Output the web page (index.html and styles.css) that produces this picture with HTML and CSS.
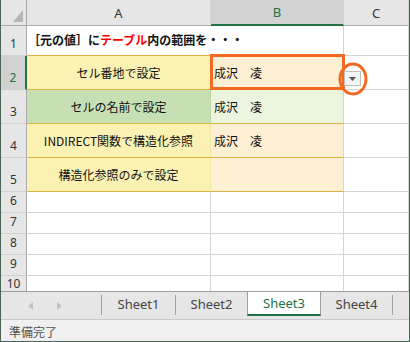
FILE: index.html
```html
<!DOCTYPE html>
<html lang="ja">
<head>
  <meta charset="UTF-8" />
  <title>Excel - 入力規則</title>
  <link rel="stylesheet" href="styles.css">
</head>
<body>

<div class="window">

  <!-- grid -->
  <div class="sheet">
    <div class="corner">
      <svg class="corner-tri" width="10" height="12" viewBox="0 0 10 12"><polygon points="10,0 10,12 0,12" fill="#b4b4b4"/></svg>
    </div>
    <div class="colhead">A</div>
    <div class="colhead sel">B</div>
    <div class="colhead">C</div>

    <div class="rowhead">1</div>
    <div class="cell title">［元の値］に<span class="red">テーブル</span>内の範囲を・・・</div>
    <div class="cell gold-b"></div>
    <div class="cell"></div>

    <div class="rowhead sel">2</div>
    <div class="cell label yel">セル番地で設定</div>
    <div class="cell org picked">
      成沢　凌
      <div class="pick-box"></div>
      <div class="drop-btn">
        <svg width="7" height="4" viewBox="0 0 7 4"><polygon points="0,0 7,0 3.5,4" fill="#555"/></svg>
      </div>
      <svg class="circle" width="30" height="34" viewBox="0 0 30 34"><ellipse cx="15" cy="17" rx="13" ry="15" fill="none" stroke="#f26a21" stroke-width="3"/></svg>
    </div>
    <div class="cell"></div>

    <div class="rowhead">3</div>
    <div class="cell label grn">セルの名前で設定</div>
    <div class="cell lgrn">成沢　凌</div>
    <div class="cell"></div>

    <div class="rowhead">4</div>
    <div class="cell label yel">INDIRECT関数で構造化参照</div>
    <div class="cell org">成沢　凌</div>
    <div class="cell"></div>

    <div class="rowhead">5</div>
    <div class="cell label yel">構造化参照のみで設定</div>
    <div class="cell org"></div>
    <div class="cell"></div>

    <div class="rowhead">6</div>
    <div class="cell"></div>
    <div class="cell"></div>
    <div class="cell"></div>

    <div class="rowhead">7</div>
    <div class="cell"></div>
    <div class="cell"></div>
    <div class="cell"></div>

    <div class="rowhead">8</div>
    <div class="cell"></div>
    <div class="cell"></div>
    <div class="cell"></div>

    <div class="rowhead">9</div>
    <div class="cell"></div>
    <div class="cell"></div>
    <div class="cell"></div>

    <div class="rowhead last">10</div>
    <div class="cell last"></div>
    <div class="cell last"></div>
    <div class="cell last"></div>
  </div>

  <!-- sheet tabs -->
  <div class="tabbar">
    <div class="tab-nav">
      <svg width="5" height="8" viewBox="0 0 5 8"><polygon points="5,0 5,8 0,4" fill="#c2c2c2"/></svg>
      <svg width="5" height="8" viewBox="0 0 5 8"><polygon points="0,0 0,8 5,4" fill="#c2c2c2"/></svg>
    </div>
    <div class="tab-sep"></div>
    <div class="tab">Sheet1</div>
    <div class="tab-sep"></div>
    <div class="tab narrow">Sheet2</div>
    <div class="tab active">Sheet3</div>
    <div class="tab narrow">Sheet4</div>
    <div class="tab-sep"></div>
  </div>

  <div class="status">準備完了</div>
</div>

</body>
</html>
```

FILE: styles.css
```css
* {
  box-sizing: border-box;
}

html, body {
  margin: 0;
}

body {
  font-family: "Noto Sans", "Noto Sans CJK JP", sans-serif;
  background: #fff;
  width: 410px;
  height: 342px;
  overflow: hidden;
}

.window {
  width: 410px;
  height: 342px;
  border: 1px solid #4a6553;
  border-top: none;
  display: flex;
  flex-direction: column;
}

/* grid */
.sheet {
  height: 291px;
  overflow: hidden;
  display: grid;
  grid-template-columns: 26px 184px 133px 1fr;
  grid-template-rows: 26px 30px repeat(4, 34px) repeat(4, 21px) 15px;
  flex: none;
}

.corner {
  background: #e6e6e6;
  border-right: 1px solid #ababab;
  border-bottom: 1px solid #ababab;
  padding: 10px 0 0 12px;
}

.corner-tri {
  display: block;
}

.colhead {
  background: #e6e6e6;
  border-right: 1px solid #d0d0d0;
  border-bottom: 1px solid #ababab;
  display: flex;
  align-items: center;
  justify-content: center;
  font-size: 13px;
  color: #333;
}

.colhead.sel {
  background: #d2d2d2;
  border-bottom: 2px solid #217346;
  color: #217346;
}

.rowhead {
  background: #e6e6e6;
  border-right: 1px solid #ababab;
  border-bottom: 1px solid #d0d0d0;
  display: flex;
  align-items: flex-end;
  justify-content: center;
  font-size: 12px;
  line-height: 14px;
  padding-bottom: 4px;
  color: #333;
}

.rowhead.sel {
  background: #d2d2d2;
  border-right: 2px solid #217346;
  color: #217346;
}

.rowhead.last {
  border-bottom: none;
  padding-bottom: 0;
}

.cell {
  border-right: 1px solid #d4d4d4;
  border-bottom: 1px solid #d4d4d4;
  display: flex;
  align-items: center;
  padding: 0 3px;
  font-family: "Noto Sans CJK JP", sans-serif;
  font-size: 12px;
  color: #111;
  white-space: nowrap;
  position: relative;
}

.cell.last {
  border-bottom: none;
}

.cell.title {
  border-right-color: transparent;
  border-bottom-color: #d8b445;
  font-weight: bold;
  padding-left: 1px;
  padding-bottom: 3px;
  overflow: visible;
  z-index: 1;
}

.red {
  color: #ff0000;
}

.gold-b {
  border-bottom-color: #d8b445;
}

.label {
  justify-content: center;
}

.yel {
  background: #fbf1b2;
  border-bottom-color: #d8b445;
  border-right-color: #f3e6a0;
}

.grn {
  background: #c6e0b4;
  border-bottom-color: #d8b445;
  border-right-color: #b9d6a4;
}

.org {
  background: #fdefd3;
  border-bottom-color: #d8b445;
}

.lgrn {
  background: #ebf4dd;
  border-bottom-color: #d8b445;
}

/* selected cell annotation */
.picked {
  z-index: 2;
}

.pick-box {
  position: absolute;
  left: -1px;
  top: -2px;
  width: 135px;
  height: 36px;
  border: 3px solid #f26a21;
}

.drop-btn {
  position: absolute;
  left: 133px;
  top: 15px;
  width: 17px;
  height: 15px;
  background: #f4f4f4;
  border: 1px solid #bdbdbd;
  display: flex;
  align-items: center;
  justify-content: center;
}

.circle {
  position: absolute;
  left: 127px;
  top: 6px;
}

/* sheet tabs */
.tabbar {
  height: 28px;
  flex: none;
  background: #e6e6e6;
  border-top: 1px solid #9e9e9e;
  display: flex;
  align-items: flex-start;
  font-size: 13px;
  color: #444;
}

.tab-nav {
  width: 100px;
  height: 27px;
  display: flex;
  align-items: center;
  gap: 24px;
  padding-left: 27px;
}

.tab-sep {
  width: 1px;
  height: 20px;
  margin-top: 3px;
  background: #9e9e9e;
}

.tab {
  width: 73px;
  height: 24px;
  display: flex;
  align-items: center;
  justify-content: center;
}

.tab.narrow {
  width: 71px;
}

.tab.active {
  width: 74px;
  background: #fff;
  border-left: 1px solid #9e9e9e;
  border-right: 1px solid #9e9e9e;
  border-bottom: 2px solid #217346;
  color: #217346;
}

.status {
  flex: 1;
  background: #f0f0f0;
  border-top: 1px solid #c8c8c8;
  font-family: "Noto Sans CJK JP", sans-serif;
  font-size: 12px;
  color: #505050;
  padding: 3px 0 0 8px;
}
```
